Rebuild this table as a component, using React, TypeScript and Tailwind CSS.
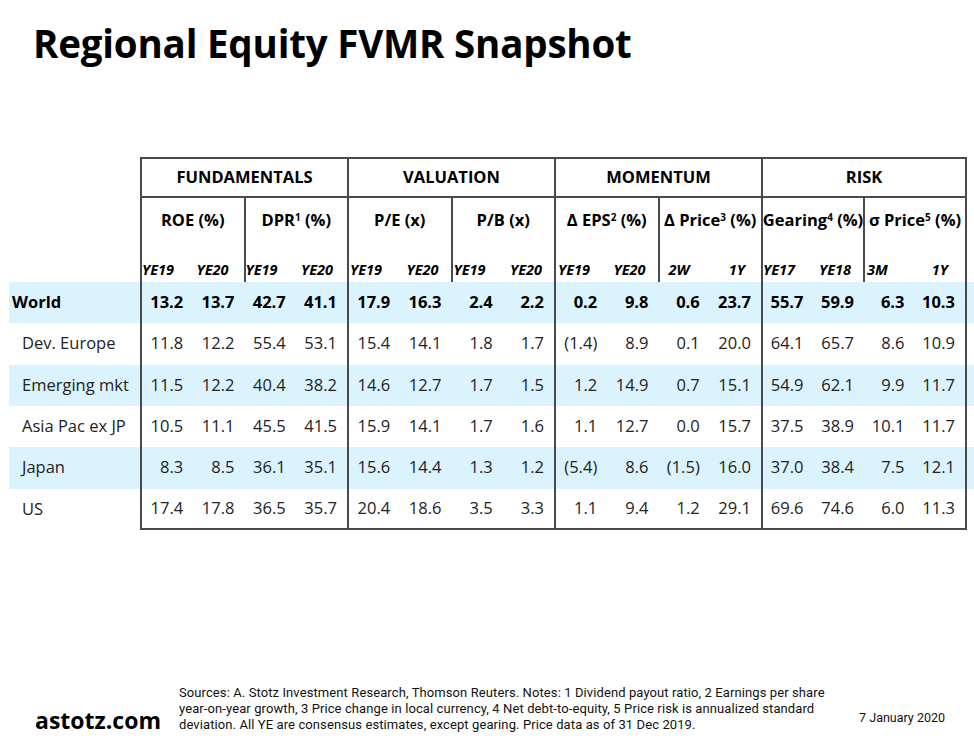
import React from 'react';

type Row = { name: string; bold?: boolean; shaded?: boolean; values: string[] };

const rows: Row[] = [
  { name: 'World', bold: true, shaded: true, values: ['13.2', '13.7', '42.7', '41.1', '17.9', '16.3', '2.4', '2.2', '0.2', '9.8', '0.6', '23.7', '55.7', '59.9', '6.3', '10.3'] },
  { name: 'Dev. Europe', values: ['11.8', '12.2', '55.4', '53.1', '15.4', '14.1', '1.8', '1.7', '(1.4)', '8.9', '0.1', '20.0', '64.1', '65.7', '8.6', '10.9'] },
  { name: 'Emerging mkt', shaded: true, values: ['11.5', '12.2', '40.4', '38.2', '14.6', '12.7', '1.7', '1.5', '1.2', '14.9', '0.7', '15.1', '54.9', '62.1', '9.9', '11.7'] },
  { name: 'Asia Pac ex JP', values: ['10.5', '11.1', '45.5', '41.5', '15.9', '14.1', '1.7', '1.6', '1.1', '12.7', '0.0', '15.7', '37.5', '38.9', '10.1', '11.7'] },
  { name: 'Japan', shaded: true, values: ['8.3', '8.5', '36.1', '35.1', '15.6', '14.4', '1.3', '1.2', '(5.4)', '8.6', '(1.5)', '16.0', '37.0', '38.4', '7.5', '12.1'] },
  { name: 'US', values: ['17.4', '17.8', '36.5', '35.7', '20.4', '18.6', '3.5', '3.3', '1.1', '9.4', '1.2', '29.1', '69.6', '74.6', '6.0', '11.3'] },
];

const groups = ['FUNDAMENTALS', 'VALUATION', 'MOMENTUM', 'RISK'];

const Sup = ({ n }: { n: string }) => <sup className="text-[10px]">{n}</sup>;

// two metrics per group; period labels with their own paddings
const metrics: { label: React.ReactNode; a: string; pa: string; b: string; pb: string }[] = [
  { label: 'ROE (%)', a: 'YE19', pa: 'pl-[0px]', b: 'YE20', pb: 'pr-[15px]' },
  { label: <>DPR<Sup n="1" /> (%)</>, a: 'YE19', pa: 'pl-[0px]', b: 'YE20', pb: 'pr-[14px]' },
  { label: 'P/E (x)', a: 'YE19', pa: 'pl-[1px]', b: 'YE20', pb: 'pr-[12px]' },
  { label: 'P/B (x)', a: 'YE19', pa: 'pl-[1px]', b: 'YE20', pb: 'pr-[12px]' },
  { label: <>Δ EPS<Sup n="2" /> (%)</>, a: 'YE19', pa: 'pl-[2px]', b: 'YE20', pb: 'pr-[12px]' },
  { label: <>Δ Price<Sup n="3" /> (%)</>, a: '2W', pa: 'pl-[9px]', b: '1Y', pb: 'pr-[16px]' },
  { label: <>Gearing<Sup n="4" /> (%)</>, a: 'YE17', pa: 'pl-[0px]', b: 'YE18', pb: 'pr-[12px]' },
  { label: <>σ Price<Sup n="5" /> (%)</>, a: '3M', pa: 'pl-[2px]', b: '1Y', pb: 'pr-[17px]' },
];

function Group({ last, className = '', children }: { last: boolean; className?: string; children: React.ReactNode }) {
  return (
    <div className={`shrink-0 border-l-2 border-[#4a4a4a] ${last ? 'w-[206px] border-r-2' : 'w-[207px]'} ${className}`}>
      {children}
    </div>
  );
}

export default function App() {
  return (
    <div className="w-[974px] h-[745px] bg-white flex flex-col font-['Open_Sans',sans-serif] text-black overflow-hidden">
      <h1 className="pl-[33px] pt-[24px] text-[38.5px] leading-none font-bold tracking-[-0.2px]">
        Regional Equity FVMR Snapshot
      </h1>

      <div className="pl-[9px] mt-[94px] flex flex-col">
        {/* group headers */}
        <div className="flex h-[41px]">
          <div className="w-[131px] shrink-0" />
          {groups.map((g, i) => (
            <Group key={g} last={i === 3} className="border-y-2 flex items-center justify-center text-[16.5px] font-bold">
              {g}
            </Group>
          ))}
        </div>

        {/* metric headers + periods */}
        <div className="flex h-[84px]">
          <div className="w-[131px] shrink-0" />
          {groups.map((g, gi) => (
            <Group key={g} last={gi === 3} className="flex">
              {metrics.slice(gi * 2, gi * 2 + 2).map((m, mi) => (
                <div
                  key={mi}
                  className={`flex-1 min-w-0 flex flex-col ${mi === 1 ? 'border-l-2 border-[#4a4a4a]' : ''}`}
                >
                  <div className="h-[46px] flex items-center justify-center text-[16.5px] font-bold whitespace-nowrap">
                    <span>{m.label}</span>
                  </div>
                  <div className="flex-1 flex items-end justify-between pb-[2px] text-[14.5px] font-bold italic leading-[20px]">
                    <span className={m.pa}>{m.a}</span>
                    <span className={m.pb}>{m.b}</span>
                  </div>
                </div>
              ))}
            </Group>
          ))}
        </div>

        {/* data rows */}
        {rows.map((r, ri) => (
          <div
            key={r.name}
            className={`flex ${ri % 3 === 1 ? 'h-[42px]' : 'h-[41px]'} ${r.shaded ? 'bg-[#dbf3fc]' : 'bg-white'} ${r.bold ? 'font-bold text-black' : 'text-[#222]'} text-[16.5px]`}
          >
            <div className={`w-[131px] shrink-0 flex items-center whitespace-nowrap ${r.bold ? 'pl-[3px]' : 'pl-[13px]'}`}>
              {r.name}
            </div>
            {groups.map((g, gi) => (
              <Group key={g} last={gi === 3} className={`flex ${ri === rows.length - 1 ? 'border-b-2' : ''}`}>
                {r.values.slice(gi * 4, gi * 4 + 4).map((v, vi) => (
                  <div key={vi} className="flex-1 min-w-0 flex items-center justify-end pr-[10px] whitespace-nowrap">
                    {v}
                  </div>
                ))}
              </Group>
            ))}
          </div>
        ))}
      </div>

      <div className="mt-auto flex items-end pl-[35px] pr-[29px] pb-[10px]">
        <div className="text-[23px] font-bold leading-none mb-[3px]">astotz.com</div>
        <div className="ml-[18px] mb-[2px] font-['Roboto',sans-serif] text-[13px] tracking-[0.1px] leading-[16px] text-[#111]">
          Sources: A. Stotz Investment Research, Thomson Reuters. Notes: 1 Dividend payout ratio, 2 Earnings per share
          <br />
          year-on-year growth, 3 Price change in local currency, 4 Net debt-to-equity, 5 Price risk is annualized standard
          <br />
          deviation. All YE are consensus estimates, except gearing. Price data as of 31 Dec 2019.
        </div>
        <div className="ml-auto font-['Roboto',sans-serif] text-[12.5px] mb-[7px] text-[#111]">7 January 2020</div>
      </div>
    </div>
  );
}
